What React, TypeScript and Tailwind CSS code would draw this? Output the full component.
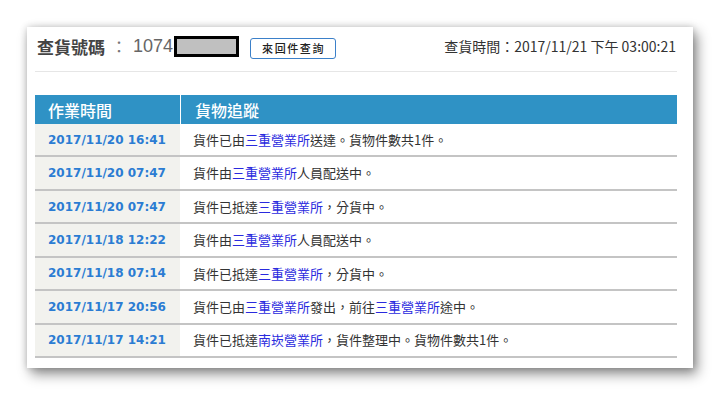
import React from "react";

type Part = { text: string; link?: boolean };

type TraceRow = {
  time: string;
  parts: Part[];
};

const STATION = "三重營業所";

const rows: TraceRow[] = [
  {
    time: "2017/11/20 16:41",
    parts: [
      { text: "貨件已由" },
      { text: STATION, link: true },
      { text: "送達。貨物件數共1件。" },
    ],
  },
  {
    time: "2017/11/20 07:47",
    parts: [{ text: "貨件由" }, { text: STATION, link: true }, { text: "人員配送中。" }],
  },
  {
    time: "2017/11/20 07:47",
    parts: [{ text: "貨件已抵達" }, { text: STATION, link: true }, { text: "，分貨中。" }],
  },
  {
    time: "2017/11/18 12:22",
    parts: [{ text: "貨件由" }, { text: STATION, link: true }, { text: "人員配送中。" }],
  },
  {
    time: "2017/11/18 07:14",
    parts: [{ text: "貨件已抵達" }, { text: STATION, link: true }, { text: "，分貨中。" }],
  },
  {
    time: "2017/11/17 20:56",
    parts: [
      { text: "貨件已由" },
      { text: STATION, link: true },
      { text: "發出，前往" },
      { text: STATION, link: true },
      { text: "途中。" },
    ],
  },
  {
    time: "2017/11/17 14:21",
    parts: [
      { text: "貨件已抵達" },
      { text: "南崁營業所", link: true },
      { text: "，貨件整理中。貨物件數共1件。" },
    ],
  },
];

const cjk = "font-['Noto_Sans_CJK_TC',sans-serif]";

const App = () => {
  return (
    <div className="h-[397px] w-[720px] overflow-hidden bg-white pl-[27px] pt-[27px]">
      <div className="h-[341px] w-[666px] bg-white pl-[8px] pr-[16px] shadow-[0_0_7px_rgba(0,0,0,0.18),4px_6px_12px_rgba(0,0,0,0.45)]">
        {/* query header */}
        <div className="flex h-[45px] items-center justify-between border-b border-[#e6e6e6] pb-[6px] pl-[2px] pr-[1px]">
          <div className="flex items-center">
            <span className={`${cjk} text-[17px] font-bold leading-none text-[#444]`}>
              查貨號碼
            </span>
            <span className={`${cjk} ml-[6px] text-[16px] leading-none text-[#777]`}>：</span>
            <span className="ml-[6px] font-['Liberation_Sans',sans-serif] text-[18px] leading-none text-[#666]">
              1074
            </span>
            <span className="ml-[1px] h-[21px] w-[65px] border-[3px] border-black bg-[#c0c0c0]" />
            <button
              type="button"
              className={`${cjk} ml-[11px] mt-[5px] h-[21px] w-[86px] rounded-[3px] border border-[#3b80c9] bg-white pl-[1px] text-[11px] font-medium leading-none tracking-[1.6px] text-[#222]`}
            >
              來回件查詢
            </button>
          </div>
          <div className={`${cjk} text-[14px] leading-none text-[#333]`}>
            查貨時間：2017/11/21 下午 03:00:21
          </div>
        </div>

        {/* trace table */}
        <div className="mt-[23px]">
          <div className={`${cjk} flex h-[29px] text-[16px] font-medium text-white`}>
            <div className="flex w-[145px] items-center bg-[#2f92c5] pl-[13px]">作業時間</div>
            <div className="flex flex-1 items-center border-l border-white bg-[#2f92c5] pl-[14px]">
              貨物追蹤
            </div>
          </div>
          {rows.map((row, i) => (
            <div key={i} className="flex h-[33.43px] border-b-[2px] border-[#c4c4c4]">
              <div className="flex w-[145px] items-center bg-[#f2f2ee] pl-[13px] font-['DejaVu_Sans',sans-serif] text-[12px] font-bold text-[#2b7cd3]">
                {row.time}
              </div>
              <div className={`${cjk} ml-px flex flex-1 items-center pl-[12px] text-[13px] text-[#333]`}>
                <span>
                  {row.parts.map((p, j) =>
                    p.link ? (
                      <span key={j} className="text-[#2a2ade]">
                        {p.text}
                      </span>
                    ) : (
                      <span key={j}>{p.text}</span>
                    )
                  )}
                </span>
              </div>
            </div>
          ))}
        </div>
      </div>
    </div>
  );
};

export default App;
